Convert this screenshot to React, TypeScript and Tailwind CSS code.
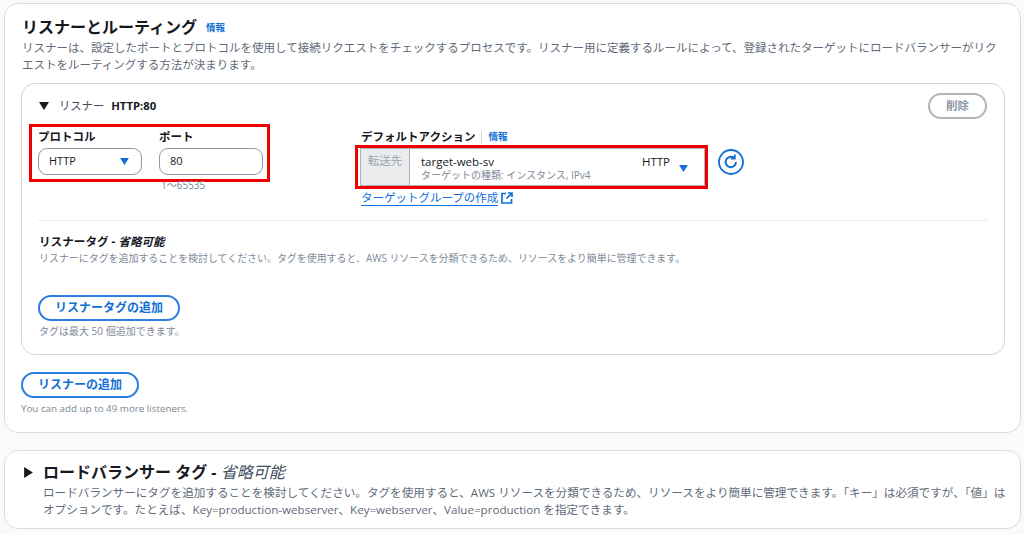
const font = { fontFamily: '"Open Sans", "Noto Sans CJK JP", sans-serif' };

const Caret = ({ className }: { className: string }) => (
    <svg viewBox="0 0 10 8" className={className} fill="currentColor">
        <path d="M0 0h10L5 8z" />
    </svg>
);

const PillButton = ({ label, className }: { label: string; className: string }) => (
    <button className={`h-[26px] rounded-full border-2 border-[#2b7de0] bg-white text-[12px] font-bold text-[#0f6fd6] ${className}`}>
        {label}
    </button>
);

const App = () => {
    return (
        <div className="h-[534px] w-[1024px] overflow-hidden bg-[#fafafa] px-1 pt-[3px] text-[#16191f]" style={font}>
            <section className="h-[430px] w-[1017px] rounded-[14px] border border-[#dcdcdc] bg-white px-4 pt-[12px]">
                <div className="ml-[1px] flex items-center gap-[9px]">
                    <h2 className="text-[16px] font-bold leading-[22px]">リスナーとルーティング</h2>
                    <a className="mt-[2px] text-[9.5px] font-bold text-[#0f6fd6]">情報</a>
                </div>
                <p className="ml-[1px] mt-[1px] w-[982px] text-[11.5px] leading-[17px] text-[#5f6b7a]">
                    リスナーは、設定したポートとプロトコルを使用して接続リクエストをチェックするプロセスです。リスナー用に定義するルールによって、登録されたターゲットにロードバランサーがリクエストをルーティングする方法が決まります。
                </p>

                <div className="mt-[10px] h-[272px] w-[984px] rounded-[14px] border border-[#d5d5d5] px-4">
                    <div className="flex h-[40px] items-start justify-between">
                        <div className="mt-[14px] flex items-center text-[11.3px]">
                            <Caret className="ml-[1px] h-[8px] w-[10px] text-[#16191f]" />
                            <span className="ml-[10px] text-[#414d5c]">リスナー</span>
                            <span className="ml-[7px] font-bold">HTTP:80</span>
                        </div>
                        <button className="mr-[1px] mt-[9px] h-[26px] w-[59px] rounded-full border-2 border-[#b5b5b5] text-[11.5px] font-bold text-[#8d99a8]">
                            削除
                        </button>
                    </div>

                    <div className="flex">
                        <div className="ml-[-9px] w-[241px] shrink-0">
                            <div className="flex h-[58px] gap-[17px] border-[3px] border-[#f00000] pl-[6px] pt-[2px]">
                                <div className="w-[104px]">
                                    <div className="text-[11.5px] font-bold leading-[15px]">プロトコル</div>
                                    <div className="mt-[4px] flex h-[27px] items-center justify-between rounded-[9px] border border-[#8d99a8] pl-[10px] pr-[12px] text-[11px]">
                                        <span>HTTP</span>
                                        <Caret className="h-[7px] w-[9px] text-[#0f6fd6]" />
                                    </div>
                                </div>
                                <div className="w-[104px]">
                                    <div className="text-[11.5px] font-bold leading-[15px]">ポート</div>
                                    <div className="mt-[4px] flex h-[27px] items-center rounded-[9px] border border-[#8d99a8] pl-[10px] text-[11px]">80</div>
                                </div>
                            </div>
                            <div className="ml-[132px] mt-[-2px] text-[10px] leading-[10px] text-[#7d8998]">1〜65535</div>
                        </div>

                        <div className="ml-[85px] w-[361px] shrink-0 pt-[5px]">
                            <div className="ml-[6px] flex h-[16px] items-center text-[11.5px] font-bold">
                                デフォルトアクション
                                <span className="mx-[6px] h-[13px] w-px bg-[#d5d5d5]" />
                                <a className="text-[9.5px] text-[#0f6fd6]">情報</a>
                            </div>
                            <div className="flex items-center">
                                <div className="flex h-[44px] w-[353px] shrink-0 border-[3px] border-[#f00000]">
                                    <div className="ml-[2px] flex w-[50px] justify-center border border-[#aab2bc] bg-[#e9ebed] pt-[4px] text-[11.5px] leading-[16px] text-[#9ba7b6]">
                                        転送先
                                    </div>
                                    <div className="flex flex-1 justify-between border-y border-r border-[#aab2bc] pl-[11px] pr-[16px]">
                                        <div>
                                            <div className="mt-[5px] text-[11.5px] leading-[16px]">target-web-sv</div>
                                            <div className="mt-[-1px] text-[10px] leading-[13px] text-[#7d8998]">ターゲットの種類: インスタンス, IPv4</div>
                                        </div>
                                        <div className="flex">
                                            <span className="mt-[5px] text-[11.5px] leading-[16px]">HTTP</span>
                                            <Caret className="ml-[9px] mt-[16px] h-[7px] w-[9px] text-[#0f6fd6]" />
                                        </div>
                                    </div>
                                </div>
                                <svg viewBox="0 0 26 26" className="ml-[10px] mt-[-11px] h-[26px] w-[26px] shrink-0 text-[#0f6fd6]" fill="none" stroke="currentColor">
                                    <circle cx="13" cy="13" r="12" strokeWidth="1.8" />
                                    <path d="M18 13a5.2 5.2 0 1 1-2-4.1" strokeWidth="2" />
                                    <path d="M16.8 5.6v3.9h-3.9" strokeWidth="1.8" />
                                </svg>
                            </div>
                            <a className="ml-[6px] mt-[1px] flex h-[16px] items-center text-[11.5px] text-[#0f6fd6]">
                                <span className="border-b border-[#0f6fd6] leading-[15px]">ターゲットグループの作成</span>
                                <svg viewBox="0 0 12 12" className="ml-[3px] h-[12px] w-[12px]" fill="none" stroke="currentColor" strokeWidth="1.7">
                                    <path d="M5 1.5H1v9.5h9.5V7M7 1h4v4M11 1 5.5 6.5" />
                                </svg>
                            </a>
                        </div>
                    </div>

                    <div className="mt-[14px] border-t border-[#e9ebed] pt-[13px]">
                        <h3 className="ml-[1px] text-[11.6px] font-bold leading-[15px]">
                            リスナータグ - <span className="italic">省略可能</span>
                        </h3>
                        <p className="ml-[1px] mt-[2px] text-[9.95px] leading-[14px] text-[#7d8998]">
                            リスナーにタグを追加することを検討してください。タグを使用すると、AWS リソースを分類できるため、リソースをより簡単に管理できます。
                        </p>
                        <PillButton label="リスナータグの追加" className="mt-[30px] block w-[142px]" />
                        <p className="ml-[1px] mt-[3px] text-[10px] leading-[14px] text-[#7d8998]">タグは最大 50 個追加できます。</p>
                    </div>
                </div>

                <PillButton label="リスナーの追加" className="mt-[17px] block w-[118px]" />
                <p className="mt-[4px] text-[9.8px] leading-[14px] text-[#7d8998]">You can add up to 49 more listeners.</p>
            </section>

            <section className="mt-[17px] h-[79px] w-[1017px] rounded-[14px] border border-[#dcdcdc] bg-white pl-[18px] pt-[10px]">
                <div className="flex items-center">
                    <Caret className="h-[9px] w-[11px] -rotate-90 text-[#16191f]" />
                    <h2 className="ml-[9px] text-[16px] font-bold leading-[22px]">
                        ロードバランサー タグ - <span className="font-normal italic text-[#414d5c]">省略可能</span>
                    </h2>
                </div>
                <p className="ml-[20px] mt-[1px] w-[966px] text-[11.6px] leading-[17px] text-[#5f6b7a]">
                    ロードバランサーにタグを追加することを検討してください。タグを使用すると、AWS リソースを分類できるため、リソースをより簡単に管理できます。「キー」は必須ですが、「値」はオプションです。たとえば、Key=production-webserver、Key=webserver、Value=production を指定できます。
                </p>
            </section>
        </div>
    );
};

export default App;
